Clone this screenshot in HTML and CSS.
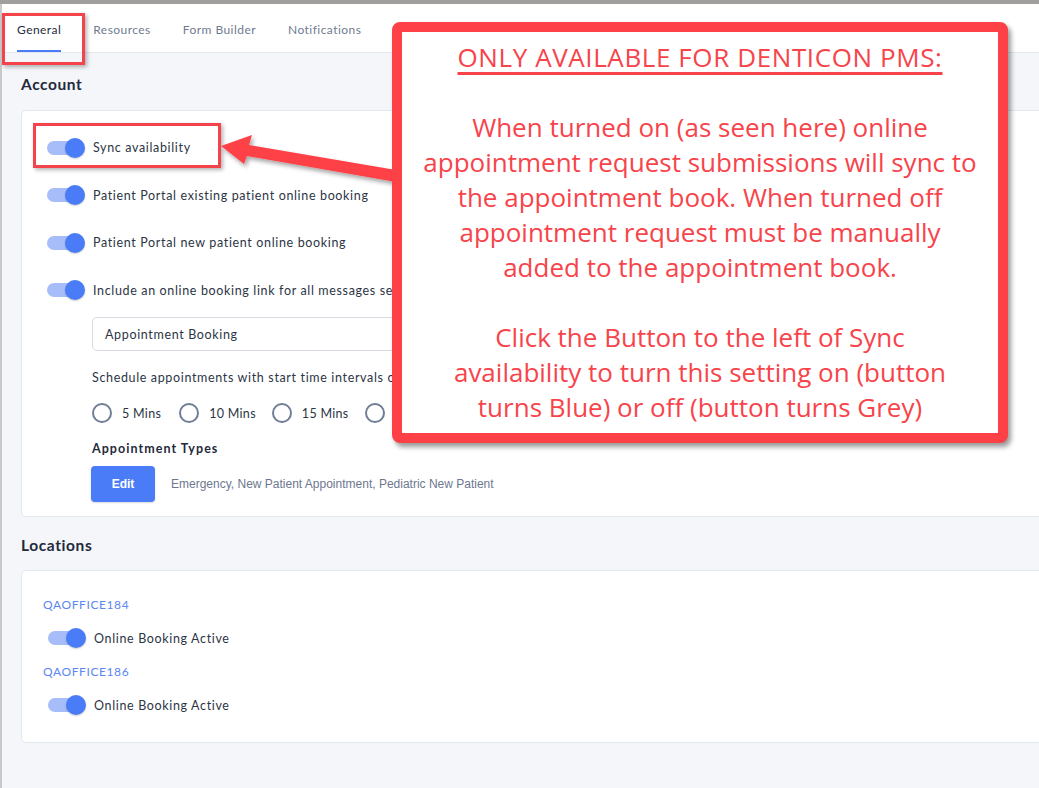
FILE: index.html
```html
<!DOCTYPE html>
<html>
<head>
<meta charset="utf-8">
<link rel="stylesheet" href="styles.css">
</head>
<body>
<div class="topbar"></div>
<div class="page">
  <nav class="tabs">
    <div class="tab active">General</div>
    <div class="tab">Resources</div>
    <div class="tab">Form Builder</div>
    <div class="tab">Notifications</div>
    <div class="tab">Settings</div>
  </nav>
  <main class="content">
    <h2 class="section-title">Account</h2>
    <section class="card account">
      <div class="toggle-row"><span class="switch"></span><span class="label">Sync availability</span></div>
      <div class="toggle-row"><span class="switch"></span><span class="label">Patient Portal existing patient online booking</span></div>
      <div class="toggle-row"><span class="switch"></span><span class="label">Patient Portal new patient online booking</span></div>
      <div class="toggle-row"><span class="switch"></span><span class="label">Include an online booking link for all messages sent to patients</span></div>
      <div class="sub">
        <div class="select">Appointment Booking</div>
        <p class="hint">Schedule appointments with start time intervals of</p>
        <div class="radios">
          <label class="radio"><span class="circle"></span>5 Mins</label>
          <label class="radio"><span class="circle"></span>10 Mins</label>
          <label class="radio"><span class="circle"></span>15 Mins</label>
          <label class="radio"><span class="circle"></span>30 Mins</label>
        </div>
        <h3 class="types-title">Appointment Types</h3>
        <div class="types">
          <button class="edit">Edit</button>
          <span class="types-list">Emergency, New Patient Appointment, Pediatric New Patient</span>
        </div>
      </div>
    </section>
    <h2 class="section-title loc-title">Locations</h2>
    <section class="card locations">
      <div class="location">
        <div class="loc-name">QAOFFICE184</div>
        <div class="toggle-row small"><span class="switch"></span><span class="label">Online Booking Active</span></div>
      </div>
      <div class="location">
        <div class="loc-name">QAOFFICE186</div>
        <div class="toggle-row small"><span class="switch"></span><span class="label">Online Booking Active</span></div>
      </div>
    </section>
  </main>
</div>

<div class="hl hl-general"></div>
<div class="hl hl-sync"></div>

<svg class="arrow" width="1039" height="788" viewBox="0 0 1039 788">
  <defs>
    <filter id="sh" x="-10%" y="-10%" width="130%" height="140%">
      <feDropShadow dx="2" dy="3" stdDeviation="2" flood-color="#000" flood-opacity="0.35"/>
    </filter>
  </defs>
  <polygon filter="url(#sh)" fill="#fe4146" points="221,146 252,135 249,145 396,170 396,182 247,156 244,164"/>
</svg>

<div class="callout">
  <p class="callout-title">ONLY AVAILABLE FOR DENTICON PMS:</p>
  <p>&nbsp;</p>
  <p>When turned on (as seen here) online<br>appointment request submissions will sync to<br>the appointment book. When turned off<br>appointment request must be manually<br>added to the appointment book.</p>
  <p>&nbsp;</p>
  <p>Click the Button to the left of Sync<br>availability to turn this setting on (button<br>turns Blue) or off (button turns Grey)</p>
</div>
</body>
</html>
```
FILE: styles.css
```css
html, body {
  margin: 0;
  padding: 0;
  overflow: hidden;
}
body {
  position: relative;
  width: 1039px;
  height: 788px;
  font-family: Lato, "Open Sans", sans-serif;
  background: #f5f6fa;
}
.topbar {
  height: 4px;
  background: #a19f9d;
}
.page {
  width: 1150px;
  height: 784px;
  border-left: 2px solid #c9c9c9;
  background: #f5f6fa;
}
.tabs {
  height: 48px;
  background: #fff;
  border-bottom: 1px solid #e3e7ef;
  display: flex;
  gap: 32px;
  padding-left: 15px;
}
.tab {
  position: relative;
  padding-top: 18px;
  font-size: 12px;
  line-height: 16px;
  letter-spacing: 0.45px;
  color: #6f7b8f;
}
.tab.active {
  color: #1f2a3c;
}
.tab.active::after {
  content: "";
  position: absolute;
  left: 0;
  right: 0;
  bottom: 0;
  height: 2px;
  background: #4a7cf7;
}
.content {
  padding: 21px 0 0 19px;
}
.section-title {
  margin: 0 0 16px;
  font-size: 15.5px;
  line-height: 20px;
  font-weight: 700;
  letter-spacing: 0.6px;
  color: #1f2a3c;
}
.loc-title {
  margin-top: 18px;
  margin-bottom: 15px;
}
.card {
  background: #fff;
  border: 1px solid #e3e7ef;
  border-radius: 5px;
}
.account {
  padding: 13px 26px 14px 25px;
}
.toggle-row {
  display: flex;
  align-items: center;
  height: 47.5px;
}
.toggle-row.small {
  height: 20px;
  margin-left: 5px;
}
.switch {
  position: relative;
  flex: none;
  width: 38px;
  height: 20px;
  margin-right: 8px;
}
.switch::before {
  content: "";
  position: absolute;
  left: 0;
  top: 3px;
  width: 32px;
  height: 14px;
  border-radius: 7px;
  background: #a6bdfa;
}
.switch::after {
  content: "";
  position: absolute;
  right: 0;
  top: 0;
  width: 20px;
  height: 20px;
  border-radius: 50%;
  background: #4a7cf7;
  box-shadow: 0 1px 2px rgba(0, 0, 0, 0.2);
}
.label {
  font-size: 12.5px;
  letter-spacing: 0.65px;
  color: #2c3545;
  white-space: nowrap;
}
.sub {
  margin-left: 45px;
}
.select {
  margin-top: 3px;
  width: 360px;
  height: 34px;
  box-sizing: border-box;
  border: 1px solid #d6dbe4;
  border-radius: 5px;
  padding-left: 12px;
  display: flex;
  align-items: center;
  font-size: 12.5px;
  letter-spacing: 0.65px;
  color: #2c3545;
}
.hint {
  margin: 19px 0 0;
  font-size: 12.5px;
  line-height: 16px;
  letter-spacing: 0.65px;
  color: #2c3545;
  white-space: nowrap;
}
.radios {
  margin-top: 17px;
  display: flex;
  gap: 16px;
}
.radio {
  display: flex;
  align-items: center;
  height: 20px;
  font-size: 12.5px;
  letter-spacing: 0.3px;
  color: #2c3545;
}
.radio:first-child {
  margin-right: 2px;
}
.circle {
  width: 20px;
  height: 20px;
  box-sizing: border-box;
  border: 2px solid #6f7e95;
  border-radius: 50%;
  margin-right: 10px;
}
.types-title {
  margin: 18px 0 0;
  font-size: 12.5px;
  line-height: 16px;
  font-weight: 700;
  letter-spacing: 1.05px;
  color: #1f2a3c;
}
.types {
  margin-top: 9px;
  display: flex;
  align-items: center;
}
.edit {
  width: 64px;
  height: 36px;
  margin-left: -1px;
  border: none;
  border-radius: 4px;
  background: #4a7cf7;
  color: #fff;
  font-family: "Liberation Sans", Arial, sans-serif;
  font-size: 12px;
  font-weight: 700;
  box-shadow: 0 1px 2px rgba(0, 0, 0, 0.15);
}
.types-list {
  margin-left: 16px;
  font-family: "Liberation Sans", Arial, sans-serif;
  font-size: 12px;
  color: #6d7890;
  white-space: nowrap;
}
.locations {
  padding: 26px 20px 27px 21px;
}
.location + .location {
  margin-top: 16px;
}
.loc-name {
  font-size: 12px;
  line-height: 16px;
  letter-spacing: 0.6px;
  color: #5b86f2;
  margin-bottom: 15px;
}

/* annotation overlays */
.hl {
  position: absolute;
  box-sizing: border-box;
  border: 3px solid #f4434a;
  box-shadow: 2px 2px 4px rgba(0, 0, 0, 0.3);
}
.hl-general {
  left: 2px;
  top: 13px;
  width: 83px;
  height: 52px;
}
.hl-sync {
  left: 33px;
  top: 123px;
  width: 188px;
  height: 45px;
}
.arrow {
  position: absolute;
  left: 0;
  top: 0;
  pointer-events: none;
}
.callout {
  position: absolute;
  left: 392px;
  top: 22px;
  width: 616px;
  height: 421px;
  box-sizing: border-box;
  border: 10px solid #fe4146;
  border-radius: 8px;
  background: #fff;
  box-shadow: 3px 4px 5px rgba(0, 0, 0, 0.4);
  padding-top: 8px;
  text-align: center;
  font-family: "Open Sans", sans-serif;
  font-size: 26px;
  line-height: 35px;
  letter-spacing: 0;
  color: #f7444b;
}
.callout p {
  margin: 0;
  white-space: nowrap;
}
.callout-title {
  letter-spacing: 0.6px;
  text-decoration: underline;
  text-underline-offset: 5px;
  text-decoration-thickness: 3px;
}
```
